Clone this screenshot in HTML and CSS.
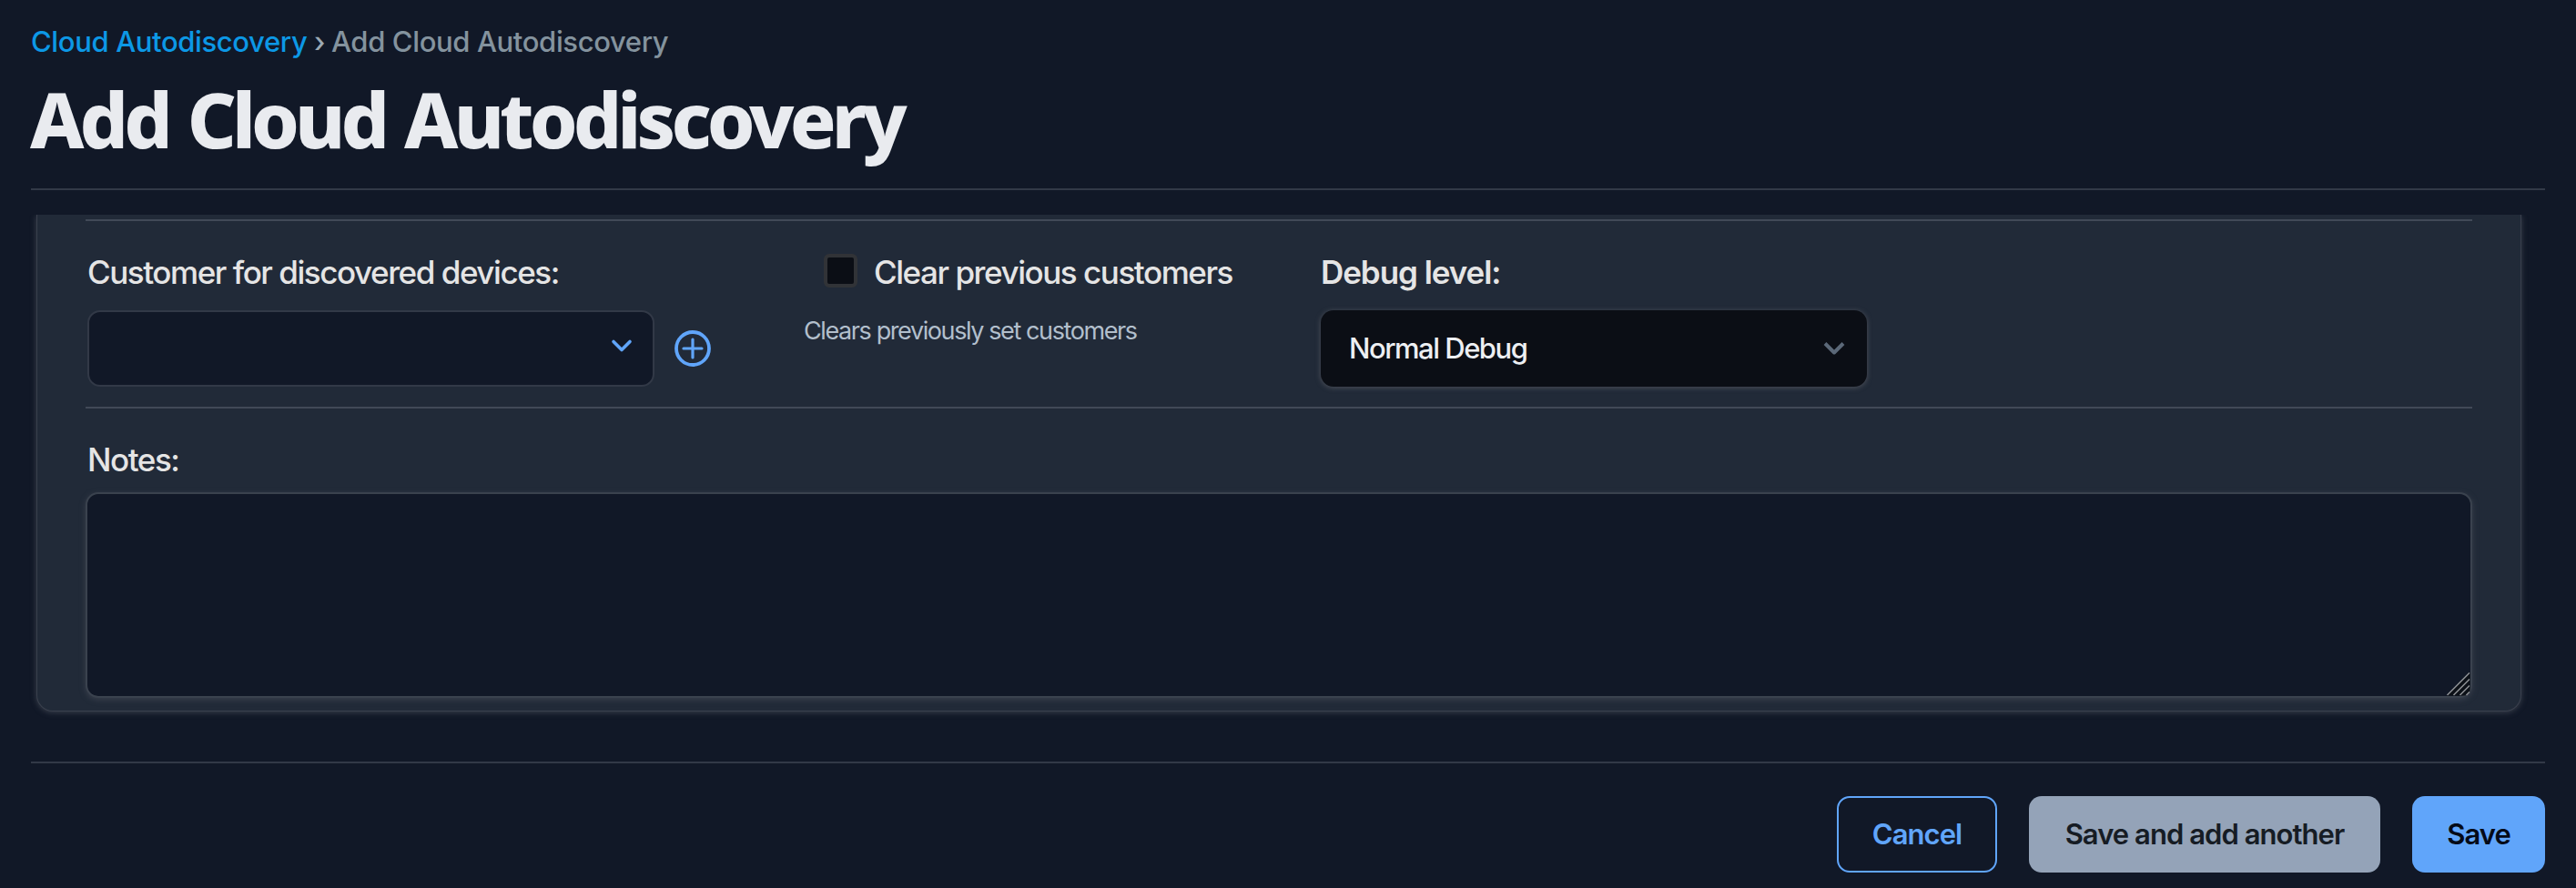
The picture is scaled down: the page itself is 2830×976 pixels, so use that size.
FILE: index.html
```html
<!DOCTYPE html>
<html lang="en">
<head>
<meta charset="utf-8">
<title>Add Cloud Autodiscovery</title>
<link rel="stylesheet" href="styles.css">
</head>
<body>
<header class="page-header">
  <nav class="breadcrumb"><a class="crumb-link">Cloud Autodiscovery</a><span class="crumb-sep">›</span><span class="crumb-current">Add Cloud Autodiscovery</span></nav>
  <h1 class="title">Add Cloud Autodiscovery</h1>
</header>
<main class="scroll-area">
  <section class="card">
    <div class="row">
      <div class="field field-customer">
        <label class="label label-customer">Customer for discovered devices:</label>
        <div class="control-line">
          <div class="select select-customer">
            <svg width="26" height="16" viewBox="0 0 26 16" fill="none" stroke="#60a5fa" stroke-width="3.6" stroke-linecap="round" stroke-linejoin="round"><path d="M4 3.5l9 9 9-9"/></svg>
          </div>
          <svg class="add-icon" width="40" height="40" viewBox="0 0 40 40" fill="none" stroke="#60a5fa" stroke-linecap="round"><circle cx="20" cy="20" r="18" stroke-width="3.8"/><path d="M20 10v20M10 20h20" stroke-width="3.2"/></svg>
        </div>
      </div>
      <div class="field field-clear">
        <div class="check-line"><span class="checkbox"></span><label class="label label-clear">Clear previous customers</label></div>
        <p class="help">Clears previously set customers</p>
      </div>
      <div class="field field-debug">
        <label class="label label-debug">Debug level:</label>
        <div class="select select-debug">
          <span class="select-value">Normal Debug</span>
          <svg width="26" height="18" viewBox="0 0 26 18" fill="none" stroke="#5b6878" stroke-width="4" stroke-linejoin="round"><path d="M3 3.5l10 10 10-10"/></svg>
        </div>
      </div>
    </div>
    <div class="notes">
      <label class="label label-notes">Notes:</label>
      <div class="textarea">
        <svg width="26" height="26" viewBox="0 0 26 26" fill="none"><path d="M0 25.5L25.5 0V19q0 6.5-6.5 6.5z" fill="#0c1017"/><path d="M.5 25L25 .5M7.500 25L25 7.500M14.500 25L25 14.500M21.500 25L25 21.500" stroke="#8f9296" stroke-width="1.500"/></svg>
      </div>
    </div>
  </section>
</main>
<footer class="actions">
  <button class="btn btn-cancel">Cancel</button>
  <button class="btn btn-another">Save and add another</button>
  <button class="btn btn-save">Save</button>
</footer>
</body>
</html>
```
FILE: styles.css
```css
* { box-sizing: border-box; }
body {
  margin: 0;
  width: 2830px;
  height: 976px;
  overflow: hidden;
  background: #111827;
  color: #e5e5e5;
  font-family: Inter, "Open Sans", sans-serif;
  display: flex;
  flex-direction: column;
}
.page-header {
  height: 209px;
  margin: 0 34px;
  padding-top: 26px;
  border-bottom: 2px solid #323947;
}
.breadcrumb {
  display: flex;
  height: 40px;
  line-height: 40px;
  font-size: 31px;
  font-weight: 450;
  letter-spacing: -0.37px;
  white-space: nowrap;
}
.crumb-link { width: 311px; color: #0c98e6; }
.crumb-sep { width: 19px; color: #9ca9b4; }
.crumb-current { color: #84939e; }
.title {
  margin: 10px 0 0 -1px;
  height: 110px;
  line-height: 110px;
  font-family: "Noto Sans", sans-serif;
  font-size: 84px;
  font-weight: 800;
  letter-spacing: -4.9px;
  word-spacing: 4px;
  color: #e9ebef;
  white-space: nowrap;
}
.scroll-area {
  margin-top: 27px;
  height: 571px;
  overflow: hidden;
  padding: 0 60px 0 40px;
}
.card {
  height: 546px;
  padding: 5px 53px 0;
  background: #212a38;
  border: 1px solid #3a404d;
  border-top: 0;
  border-radius: 0 0 18px 18px;
  box-shadow: 0 1px 6px 0 #3a404d;
}
.row {
  display: flex;
  height: 208px;
  border-top: 2px solid #414957;
  border-bottom: 2px solid #414957;
}
.label {
  display: block;
  height: 44px;
  line-height: 44px;
  font-size: 35px;
  font-weight: 480;
  letter-spacing: -1.45px;
  white-space: nowrap;
}
.label-debug { font-weight: 600; letter-spacing: -1.05px; }
.field { padding-top: 34px; }
.field-customer { width: 789px; padding-left: 2px; }
.control-line { display: flex; align-items: center; gap: 22px; margin-top: 20px; }
.select {
  display: flex;
  align-items: center;
  justify-content: space-between;
  height: 84px;
  border-radius: 14px;
}
.select-customer {
  width: 623px;
  justify-content: flex-end;
  padding: 0 21px 6px 0;
  background: #111827;
  border: 2px solid #323947;
}
.field-clear { width: 568px; }
.check-line { display: flex; padding-left: 22px; gap: 18px; }
.checkbox {
  width: 37px;
  height: 37px;
  margin-top: 2px;
  background: #0b0e15;
  border: 4px solid #313337;
  border-radius: 6px;
}
.help {
  margin: 25px 0 0;
  line-height: 36px;
  font-size: 27px;
  letter-spacing: -1.4px;
  color: #b2bfcc;
  white-space: nowrap;
}
.select-debug {
  width: 600px;
  margin-top: 20px;
  padding: 0 23px 0 31px;
  background: #0b0e15;
  box-shadow: 0 1px 5px 1px #434852;
}
.select-value { padding-bottom: 2px; font-size: 31px; letter-spacing: -1.5px; font-weight: 450; color: #edeff2; }
.notes { padding-top: 34px; }
.label-notes { padding-left: 2px; }
.textarea {
  display: flex;
  justify-content: flex-end;
  align-items: flex-end;
  height: 226px;
  margin-top: 14px;
  background: #111827;
  border: 2px solid #3a424e;
  border-radius: 14px;
  box-shadow: 0 2px 6px #3a404d;
}
.actions {
  display: flex;
  justify-content: flex-end;
  margin: 30px 34px 0;
  height: 139px;
  padding-top: 36px;
  border-top: 2px solid #323947;
}
.btn {
  height: 84px;
  padding: 0 0 2px;
  border: 0;
  border-radius: 14px;
  font-family: inherit;
  font-size: 31px;
  font-weight: 600;
  letter-spacing: -0.95px;
  white-space: nowrap;
}
.btn-cancel { width: 176px; background: transparent; border: 2px solid #60a5fa; color: #60a5fa; }
.btn-another { width: 386px; margin-left: 35px; background: #94a3b8; color: #161c24; }
.btn-save { width: 146px; margin-left: 35px; background: #60a5fa; color: #050b18; }
```
